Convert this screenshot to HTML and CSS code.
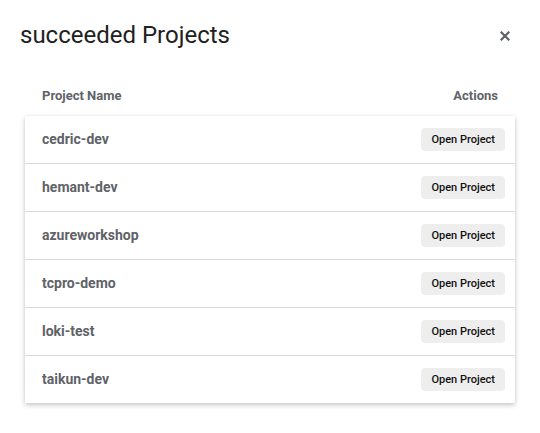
FILE: index.html
```html
<!DOCTYPE html>
<html>
<head>
<meta charset="utf-8">
<link rel="stylesheet" href="styles.css">
</head>
<body>
<div class="dialog">
  <div class="dialog-head">
    <h1 class="title">succeeded Projects</h1>
    <button class="close" aria-label="Close">
      <svg width="10" height="10" viewBox="0 0 10 10"><path d="M1.5 1.5L8.5 8.5M8.5 1.5L1.5 8.5" stroke="#5f6368" stroke-width="2.2" stroke-linecap="square"/></svg>
    </button>
  </div>
  <div class="table">
    <div class="thead">
      <span>Project Name</span>
      <span>Actions</span>
    </div>
    <div class="card">
      <div class="row"><span class="name">cedric-dev</span><button class="btn">Open Project</button></div>
      <div class="row"><span class="name">hemant-dev</span><button class="btn">Open Project</button></div>
      <div class="row"><span class="name">azureworkshop</span><button class="btn">Open Project</button></div>
      <div class="row"><span class="name">tcpro-demo</span><button class="btn">Open Project</button></div>
      <div class="row"><span class="name">loki-test</span><button class="btn">Open Project</button></div>
      <div class="row"><span class="name">taikun-dev</span><button class="btn">Open Project</button></div>
    </div>
  </div>
</div>
</body>
</html>
```
FILE: styles.css
```css
* { box-sizing: border-box; }
html, body { margin: 0; padding: 0; background: #fff; }
body { font-family: Roboto, "Liberation Sans", sans-serif; width: 540px; height: 433px; overflow: hidden; }
.dialog { padding: 21px 25px 0 20px; }
.dialog-head { display: flex; justify-content: space-between; align-items: center; height: 29px; }
.title { margin: 0; font-size: 24px; font-weight: 400; color: #212121; line-height: 29px; }
.close { border: 0; background: none; padding: 0; width: 10px; height: 10px; display: flex; margin-right: 5px; margin-top: 0; }
.table { margin-top: 34px; margin-left: 5px; }
.thead { display: flex; justify-content: space-between; padding: 0 17px; height: 32px; font-size: 13px; font-weight: 700; color: #5f6368; line-height: 24px; }
.card { background: #fff; box-shadow: 0 2px 5px rgba(0,0,0,0.22), 0 0 2px rgba(0,0,0,0.06); }
.row { display: flex; justify-content: space-between; align-items: center; height: 48px; padding: 0 10px 1px 17px; border-bottom: 1px solid #d9d9d9; }
.row:last-child { border-bottom: 0; height: 47px; }
.name { font-size: 14px; font-weight: 700; color: #5f6368; line-height: 20px; }
.btn { border: 0; background: #eeeeee; border-radius: 4px; height: 23px; padding: 0 10px; font-family: Roboto, "Liberation Sans", sans-serif; font-size: 11px; font-weight: 500; color: #111; }
```
